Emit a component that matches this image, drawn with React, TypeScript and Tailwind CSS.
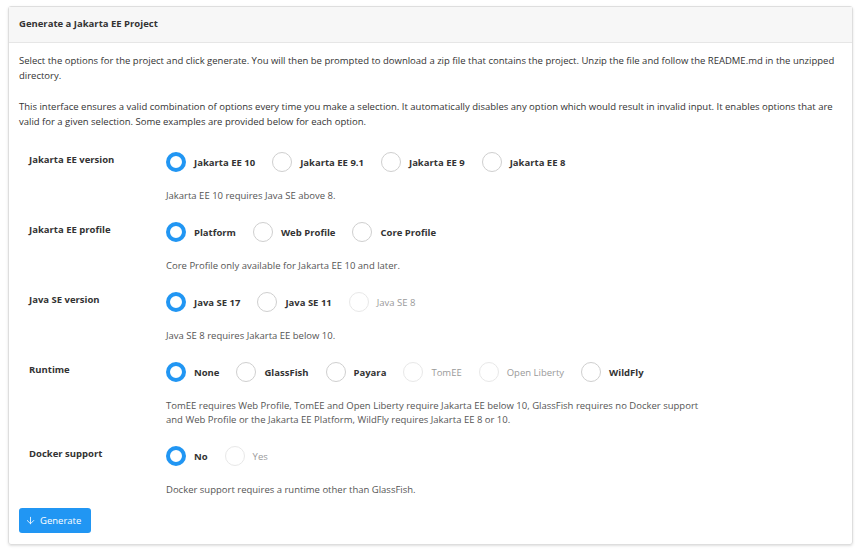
import { ArrowDown } from "lucide-react";

type Opt = { label: string; selected?: boolean; disabled?: boolean };

const rows: { title: string; options: Opt[]; help: string[] }[] = [
  {
    title: "Jakarta EE version",
    options: [
      { label: "Jakarta EE 10", selected: true },
      { label: "Jakarta EE 9.1" },
      { label: "Jakarta EE 9" },
      { label: "Jakarta EE 8" },
    ],
    help: ["Jakarta EE 10 requires Java SE above 8."],
  },
  {
    title: "Jakarta EE profile",
    options: [{ label: "Platform", selected: true }, { label: "Web Profile" }, { label: "Core Profile" }],
    help: ["Core Profile only available for Jakarta EE 10 and later."],
  },
  {
    title: "Java SE version",
    options: [{ label: "Java SE 17", selected: true }, { label: "Java SE 11" }, { label: "Java SE 8", disabled: true }],
    help: ["Java SE 8 requires Jakarta EE below 10."],
  },
  {
    title: "Runtime",
    options: [
      { label: "None", selected: true },
      { label: "GlassFish" },
      { label: "Payara" },
      { label: "TomEE", disabled: true },
      { label: "Open Liberty", disabled: true },
      { label: "WildFly" },
    ],
    help: [
      "TomEE requires Web Profile, TomEE and Open Liberty require Jakarta EE below 10, GlassFish requires no Docker support",
      "and Web Profile or the Jakarta EE Platform, WildFly requires Jakarta EE 8 or 10.",
    ],
  },
  {
    title: "Docker support",
    options: [{ label: "No", selected: true }, { label: "Yes", disabled: true }],
    help: ["Docker support requires a runtime other than GlassFish."],
  },
];

function Radio({ opt }: { opt: Opt }) {
  const ring = opt.selected
    ? "border-[4px] border-[#2196f3]"
    : opt.disabled
    ? "border-[1.5px] border-[#e8e8e8]"
    : "border-[1.5px] border-[#cfcfcf]";
  return (
    <div className="flex items-center mr-[17px]">
      <span className={`w-[20px] h-[20px] rounded-full bg-white box-border ${ring}`} />
      <span
        className={`ml-[8px] text-[9.5px] ${opt.disabled ? "text-[#9a9a9a]" : "font-bold text-[#333]"}`}
      >
        {opt.label}
      </span>
    </div>
  );
}

export default function App() {
  return (
    <div className="min-h-screen bg-white pt-[6px] pl-[8px] pr-[2px] text-[#333]" style={{ fontFamily: '"Open Sans", sans-serif' }}>
      <div className="border border-[#dedede] rounded-[3px] shadow-sm">
        <div className="h-[36px] flex items-center px-[10px] bg-[#f7f7f7] border-b border-[#e6e6e6] text-[9.5px] font-bold">
          Generate a Jakarta EE Project
        </div>
        <div className="px-[10px] pt-[10px] pb-[11px] text-[9.5px] leading-[15px]">
          <p>
            Select the options for the project and click generate. You will then be prompted to download a zip file that
            contains the project. Unzip the file and follow the README.md in the unzipped directory.
          </p>
          <p className="mt-[16px]">
            This interface ensures a valid combination of options every time you make a selection. It automatically
            disables any option which would result in invalid input. It enables options that are valid for a given
            selection. Some examples are provided below for each option.
          </p>
          <div className="mt-[23px] flex flex-col gap-[19px]">
            {rows.map((r) => (
              <div key={r.title} className="flex">
                <div className="w-[147px] pl-[10px] font-bold text-[9.5px] leading-[15px]">{r.title}</div>
                <div className="flex-1">
                  <div className="flex h-[20px]">
                    {r.options.map((o) => (
                      <Radio key={o.label} opt={o} />
                    ))}
                  </div>
                  <div className="mt-[17px] text-[#555] leading-[14px]">
                    {r.help.map((h) => (
                      <div key={h}>{h}</div>
                    ))}
                  </div>
                </div>
              </div>
            ))}
          </div>
          <button className="mt-[11px] h-[25px] pl-[6px] pr-[10px] flex items-center gap-[4px] bg-[#2196f3] text-white rounded-[3px] text-[9.5px]">
            <ArrowDown size={11} strokeWidth={1.8} />
            Generate
          </button>
        </div>
      </div>
    </div>
  );
}
